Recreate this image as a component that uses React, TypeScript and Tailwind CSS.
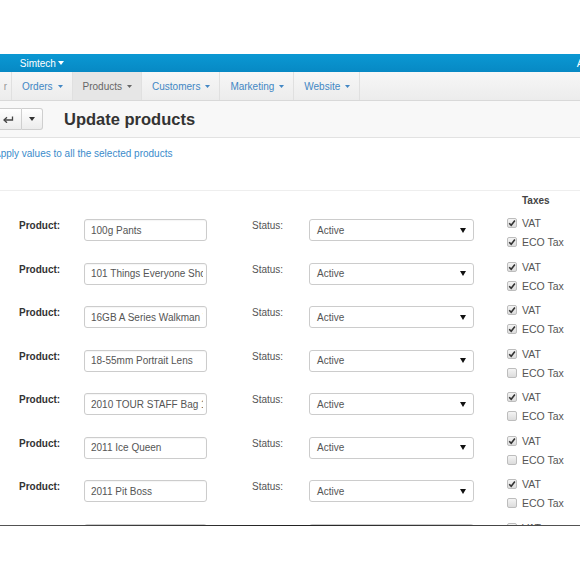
import React from "react";

const F = { fontFamily: '"Liberation Sans", Arial, Helvetica, sans-serif' };

const rows = [
  { name: "100g Pants", vat: true, eco: true },
  { name: "101 Things Everyone Should Know About Economics", vat: true, eco: true },
  { name: "16GB A Series Walkman Video MP3", vat: true, eco: true },
  { name: "18-55mm Portrait Lens", vat: true, eco: false },
  { name: '2010 TOUR STAFF Bag 10.5"', vat: true, eco: false },
  { name: "2011 Ice Queen", vat: true, eco: false },
  { name: "2011 Pit Boss", vat: true, eco: false },
  { name: "2011 Tour Edge Exotics", vat: true, eco: false },
];

function Box({ checked }: { checked: boolean }) {
  return (
    <span className="inline-flex h-[10px] w-[10px] items-center justify-center rounded-[2px] border border-[#bdbdbd] bg-gradient-to-b from-[#f4f4f4] to-[#dcdcdc]">
      {checked && (
        <svg width="8" height="8" viewBox="0 0 8 8">
          <path d="M1.2 4.2 L3.2 6.2 L6.9 1.5" stroke="#333" strokeWidth="1.6" fill="none" />
        </svg>
      )}
    </span>
  );
}

function Caret() {
  return (
    <svg width="5" height="3" viewBox="0 0 5 3" className="ml-[5px] mt-[1px]">
      <path d="M0 0 L5 0 L2.5 3 Z" fill="currentColor" />
    </svg>
  );
}

function NavItem({ label, active }: { label: string; active?: boolean }) {
  return (
    <div
      className={`flex h-full items-center border-r border-[#e0e0e0] pl-[10px] pr-[9px] ${
        active ? "bg-[#e6e6e6] text-[#666]" : "text-[#4287c4]"
      }`}
    >
      <span>{label}</span>
      <Caret />
    </div>
  );
}

export default function App() {
  return (
    <div className="h-[580px] w-[580px] overflow-hidden bg-white text-[10px]" style={F}>
      <div className="h-[54px] bg-white" />
      {/* blue top bar */}
      <div className="relative flex h-[18px] items-center bg-gradient-to-b from-[#0b98d3] to-[#0789c4] text-white">
        <span className="ml-[-3px] text-[#bfe6f7]">ǃ</span>
        <span className="ml-[20px] flex items-center">
          Simtech
          <svg width="6" height="4" viewBox="0 0 6 4" className="ml-[2px]">
            <path d="M0 0 L6 0 L3 4 Z" fill="#fff" />
          </svg>
        </span>
        <span className="absolute right-[-4px] top-[1px] text-[11px]">A</span>
      </div>
      {/* nav */}
      <div className="flex h-[29px] items-stretch border-b border-[#d9d9d9] bg-gradient-to-b from-[#f7f7f7] to-[#ececec] text-[10px]">
        <div className="flex h-full w-[12px] items-center justify-end border-r border-[#e0e0e0] pr-[4px] text-[#999]">r</div>
        <NavItem label="Orders" />
        <NavItem label="Products" active />
        <NavItem label="Customers" />
        <NavItem label="Marketing" />
        <NavItem label="Website" />
      </div>
      {/* toolbar */}
      <div className="flex h-[37px] items-center border-b border-[#e2e2e2] bg-[#f8f8f8]">
        <div className="ml-[-20px] flex h-[22px]">
          <div className="flex w-[42px] items-center justify-end rounded-l-[3px] border border-[#cfcfcf] bg-gradient-to-b from-white to-[#ececec] pr-[7px]">
            <svg width="11" height="8" viewBox="0 0 11 8">
              <path d="M1 5 L9.5 5 L9.5 1.5" stroke="#444" strokeWidth="1.3" fill="none" />
              <path d="M4 2.2 L1 5 L4 7.8" stroke="#444" strokeWidth="1.3" fill="none" />
            </svg>
          </div>
          <div className="flex w-[21px] items-center justify-center rounded-r-[3px] border border-l-0 border-[#cfcfcf] bg-gradient-to-b from-white to-[#ececec]">
            <svg width="6" height="4" viewBox="0 0 6 4">
              <path d="M0 0 L6 0 L3 4 Z" fill="#333" />
            </svg>
          </div>
        </div>
        <h1 className="ml-[21px] text-[16.5px] font-bold text-[#333]">Update products</h1>
      </div>
      {/* content */}
      <div className="h-[387px] overflow-hidden bg-white">
        <div className="h-[52px] pt-[8px]">
          <span className="ml-[-6px] leading-[12px] text-[#3a8bcb]">Apply values to all the selected products</span>
        </div>
        <div className="h-[26px] border-t border-[#eeeeee] pt-[4px]">
          <div className="ml-[522px] font-bold leading-[12px] text-[#444]">Taxes</div>
        </div>
        {rows.map((r, i) => (
          <div key={i} className="flex h-[43.5px] items-start">
            <div className="ml-[19px] mt-[4px] w-[65px] font-bold leading-[12px] text-[#333]">Product:</div>
            <div className="mt-[3px] flex h-[22px] w-[123px] items-center rounded-[3px] border border-[#cccccc] bg-white pl-[6px] pr-[3px] text-[#555] shadow-[inset_0_1px_1px_rgba(0,0,0,0.04)]">
              <div className="w-full overflow-hidden whitespace-nowrap">{r.name}</div>
            </div>
            <div className="ml-[45px] mt-[4px] w-[57px] leading-[12px] text-[#555]">Status:</div>
            <div className="mt-[3px] flex h-[22px] w-[165px] items-center justify-between rounded-[3px] border border-[#cccccc] bg-white pl-[7px] pr-[7px] text-[#555]">
              <span>Active</span>
              <svg width="6" height="5" viewBox="0 0 6 5">
                <path d="M0 0 L6 0 L3 5 Z" fill="#111" />
              </svg>
            </div>
            <div className="ml-[33px] mt-[1px] flex flex-col gap-[7px] leading-[12px] text-[#555]">
              <div className="flex items-center gap-[5px]">
                <Box checked={r.vat} />
                <span className="text-[10.5px]">VAT</span>
              </div>
              <div className="flex items-center gap-[5px]">
                <Box checked={r.eco} />
                <span className="text-[10.5px]">ECO Tax</span>
              </div>
            </div>
          </div>
        ))}
      </div>
      <div className="h-px bg-gradient-to-r from-[#555] via-[#222] to-[#555]" />
      <div className="h-[55px] bg-white" />
    </div>
  );
}
